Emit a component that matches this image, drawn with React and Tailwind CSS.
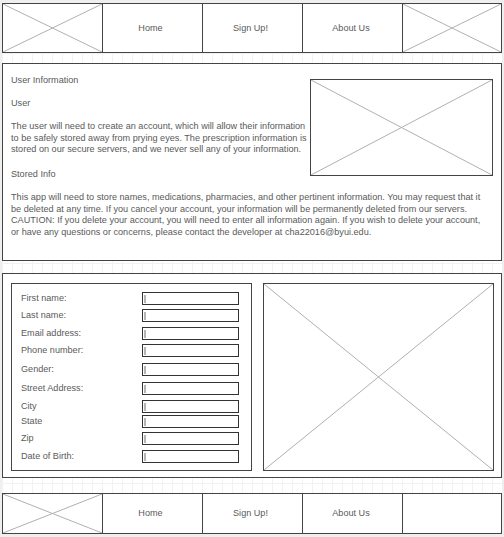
import React from 'react'

const fields = [
  { label: 'First name:', gap: 'mt-[8px]' },
  { label: 'Last name:', gap: 'mt-[4px]' },
  { label: 'Email address:', gap: 'mt-[5px]' },
  { label: 'Phone number:', gap: 'mt-[4px]' },
  { label: 'Gender:', gap: 'mt-[6px]' },
  { label: 'Street Address:', gap: 'mt-[6px]' },
  { label: 'City', gap: 'mt-[5px]' },
  { label: 'State', gap: 'mt-[2px]' },
  { label: 'Zip', gap: 'mt-[4px]' },
  { label: 'Date of Birth:', gap: 'mt-[5px]' },
]

function Cross() {
  return (
    <svg className="block h-full w-full" viewBox="0 0 100 100" preserveAspectRatio="none">
      <line x1="0" y1="0" x2="100" y2="100" stroke="#b0b0b0" strokeWidth="1" vectorEffect="non-scaling-stroke" />
      <line x1="100" y1="0" x2="0" y2="100" stroke="#b0b0b0" strokeWidth="1" vectorEffect="non-scaling-stroke" />
    </svg>
  )
}

function NavBar({ height, lastImage }) {
  return (
    <div className={`flex ${height} border border-[#444] bg-white text-[9.1px] text-[#5a5a5a]`}>
      <div className="w-[99px]">
        <Cross />
      </div>
      <div className="flex w-[100px] items-center justify-center border-l border-[#444] pr-[4px] pt-[1px]">Home</div>
      <div className="flex w-[100px] items-center justify-center border-l border-[#444] pr-[4px] pt-[1px]">Sign Up!</div>
      <div className="flex w-[100px] items-center justify-center border-l border-[#444] pr-[3px] pt-[1px]">About Us</div>
      <div className="flex-1 border-l border-[#444]">{lastImage && <Cross />}</div>
    </div>
  )
}

export default function App() {
  return (
    <div className="min-h-[537px] bg-[#efefef] pl-[2px] pt-[3px] font-['Liberation_Sans',Arial,sans-serif]">
      <div className="w-[500px] bg-white bg-[linear-gradient(to_right,#f2f2f2_1px,transparent_1px),linear-gradient(to_bottom,#f2f2f2_1px,transparent_1px)] bg-size-[10px_10px]">
        {/* header nav */}
        <NavBar height="h-[50px]" lastImage />

        {/* user information */}
        <section className="mt-[10px] h-[198px] border border-[#444] bg-white pl-[8px] pr-[8px] pt-[11px] text-[9.15px] leading-[11.5px] text-[#5a5a5a]">
          <div className="float-right mt-[4px] ml-[1px] h-[97px] w-[183px] border border-[#444]">
            <Cross />
          </div>
          <p className="mb-[11.5px]">User Information</p>
          <p className="mb-[11.5px]">User</p>
          <p className="mb-[13.5px]">
            The user will need to create an account, which will allow their information to be safely stored away from
            prying eyes. The prescription information is stored on our secure servers, and we never sell any of your
            information.
          </p>
          <p className="mb-[11.5px]">Stored Info</p>
          <p className="pr-[3px]">
            This app will need to store names, medications, pharmacies, and other pertinent information. You may
            request that it be deleted at any time. If you cancel your account, your information will be permanently
            deleted from our servers. CAUTION: If you delete your account, you will need to enter all information
            again. If you wish to delete your account, or have any questions or concerns, please contact the developer
            at cha22016@byui.edu.
          </p>
        </section>

        {/* sign up form */}
        <section className="mt-[12px] flex h-[205px] gap-[11px] border border-[#444] bg-white pl-[8px] pr-[7px] pt-[9px]">
          <div className="h-[188px] w-[241px] border border-[#444] pl-[9px]">
            {fields.map((f) => (
              <div key={f.label} className={`flex h-[13px] items-center ${f.gap}`}>
                <span className="w-[121px] text-[9.1px] text-[#5a5a5a]">{f.label}</span>
                <div className="flex h-[13px] w-[97px] items-center border border-[#333] pl-[1px]">
                  <span className="h-[8px] w-[2px] bg-[#b5b5b5]" />
                </div>
              </div>
            ))}
          </div>
          <div className="h-[188px] flex-1 border border-[#444]">
            <Cross />
          </div>
        </section>

        {/* footer nav */}
        <div className="mt-[15px]">
          <NavBar height="h-[41px]" />
        </div>
      </div>
    </div>
  )
}
